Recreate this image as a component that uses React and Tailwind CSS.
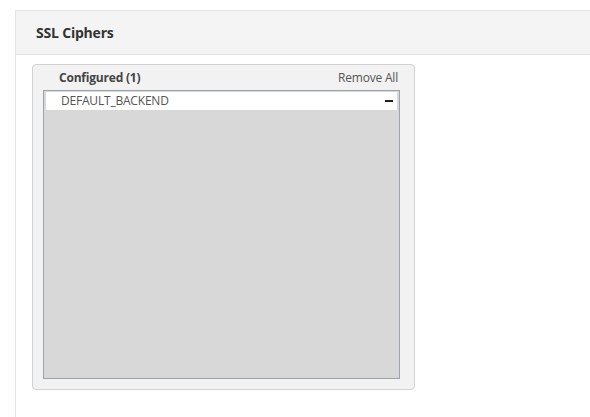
export default function App() {
  return (
    <div className="w-[590px] h-[417px] bg-white pt-[10px] pl-[15px] overflow-hidden" style={{ fontFamily: '"Open Sans", "Noto Sans", sans-serif' }}>
      <div className="h-[407px] border-l border-t border-[#e4e4e4]">
        <div className="h-[44px] bg-[#f4f4f4] border-b border-[#e2e2e2] flex items-center pl-[20px]">
          <span className="text-[14px] font-bold text-[#333333] tracking-[-0.2px]">SSL Ciphers</span>
        </div>
        <div className="pl-[16px] pt-[9px]">
          <div className="w-[383px] h-[326px] bg-[#f2f2f2] border border-[#d2d2d2] rounded-[4px] flex flex-col">
            <div className="h-[25px] flex items-center justify-between pl-[26px] pr-[16px]">
              <span className="text-[12px] font-bold text-[#444444] tracking-[-0.2px]">Configured (1)</span>
              <span className="text-[12px] text-[#555555] tracking-[-0.2px]">Remove All</span>
            </div>
            <div className="ml-[10px] w-[357px] h-[289px] bg-[#d8d8d8] border border-[#9aa4ac] pt-[1px] px-[2px]">
              <div className="h-[18px] bg-white flex items-center justify-between pl-[15px] pr-[4px]">
                <span className="text-[12px] text-[#555555] tracking-[-0.2px]">DEFAULT_BACKEND</span>
                <span className="block w-[8px] h-[2px] bg-[#222222]"></span>
              </div>
            </div>
          </div>
        </div>
      </div>
    </div>
  );
}
